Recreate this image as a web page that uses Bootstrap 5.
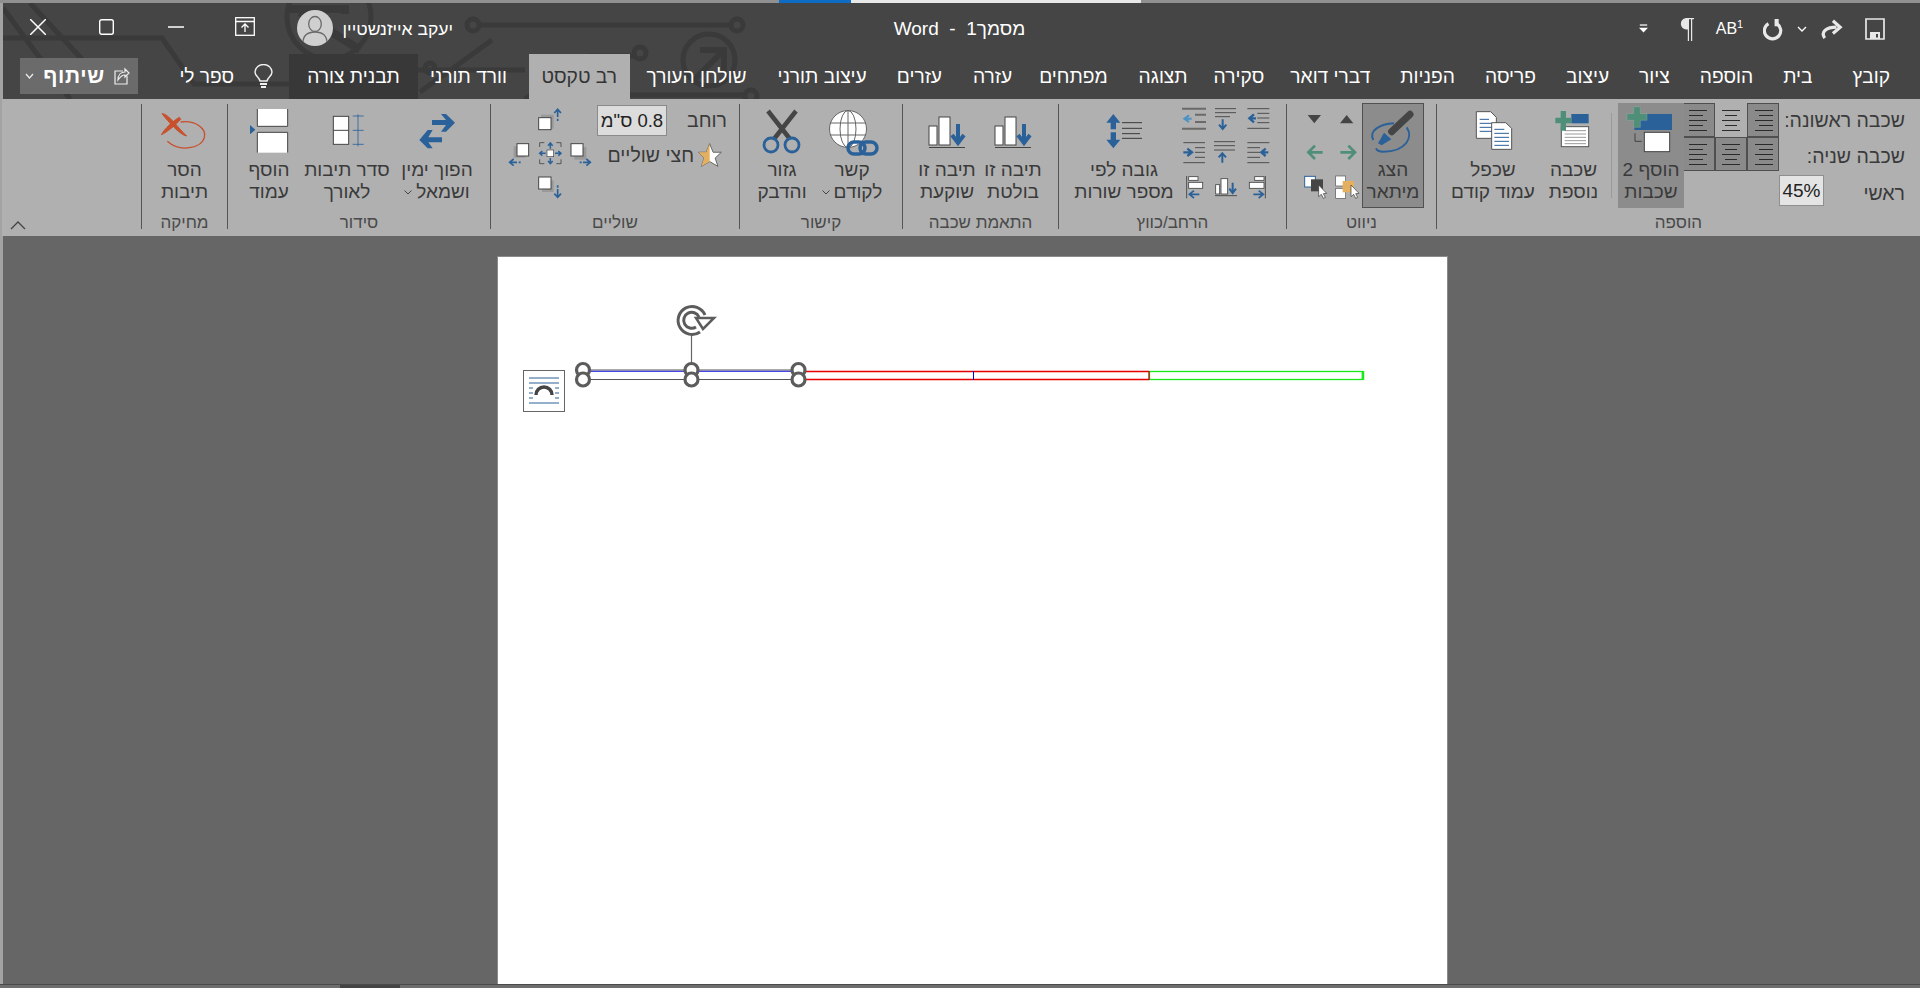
<!DOCTYPE html>
<html lang="he">
<head>
<meta charset="utf-8">
<title>מסמך1 - Word</title>
<link href="https://cdn.jsdelivr.net/npm/bootstrap@5.3.0/dist/css/bootstrap.min.css" rel="stylesheet">
<style>
html,body{height:988px;overflow:hidden;margin:0;background:#666;font-family:"Liberation Sans",Arial,sans-serif;color:#3a3a3a}
svg{display:block;flex:none}
.wd-app{height:988px;border-left:3px solid #a3a3a3}
.wd-strip{height:3px;background:#909090;margin-left:-3px}
.wd-strip-blue{width:72px;margin-left:779px;background:#0f6cc4}
.wd-strip-white{width:290px;background:#e8e8e8}
.wd-head{height:96px;background:#454545;color:#fff}
.wd-bg{left:0;top:0;z-index:0}
.wd-titlerow,.wd-tabrow{z-index:1}
.wd-titlerow{height:51px}
.wd-sys{width:69px;height:51px;padding:0 0 4px;color:#fff;border:0;border-radius:0}
.wd-avatar{width:36px;height:36px;margin:7px 10px 0 18px;border-radius:50%;background:#cfcfcf;overflow:hidden}
.wd-user{font-size:17.5px;width:110px;padding-top:2px;white-space:nowrap}
.wd-side{flex:1 1 0}
.wd-side-r{flex:1 1 0}
.wd-title{font-size:19px;padding-top:2px;margin-left:20px;white-space:nowrap}
.wd-qat{width:43px;height:51px;padding:0;border:0}
.wd-qat-sm{width:16px}
.wd-tabrow{height:45px;font-size:19.2px;padding-right:15px;padding-left:17px}
.wd-tab{padding:0 15px;height:45px;line-height:46px;font-size:19.2px;white-space:nowrap;color:#fff;border:0;border-radius:0}
.wd-tab.wd-on{background:#b0b0b0;color:#333;padding:0 13px;margin:0 1.5px}
.wd-tab.wd-ctx{background:#383838;padding:0 18px}
.wd-g10{margin-left:10px}
.wd-g5{margin-left:5px}
.wd-g1{margin-left:1px}
.wd-gn3{margin-left:-3px}
.wd-gn4{margin-left:-4px}
.wd-tab.wd-on.wd-g5{margin-left:6.5px}
.wd-bulb{margin:0 16px 0 12px}
.wd-share{width:118px;height:36px;margin:4px auto 0 0;background:#6b6b6b;color:#fff;font-weight:700;font-size:21px;letter-spacing:.6px;padding:0 8px 0 5px;border-radius:0;border:0;flex:none}
.wd-ribbon{height:137px;background:#b0b0b0;padding-top:4px;margin-left:-1px}
.rb-group{height:131px;flex:none;padding-right:var(--rp,0)}
.rb-body{height:110px}
.rb-label{height:20px;line-height:20px;font-size:17px;color:#4a4a4a;text-align:center;white-space:nowrap;margin-right:calc(-1*var(--rp,0px))}
.rb-sep{width:1px;height:125px;margin-top:1px;background:#555;flex:none}
.rb-big{height:105px;font-size:19px;line-height:22px;color:#3a3a3a;padding:0;border:0;border-radius:0;white-space:nowrap;flex:none}
.rb-big.rb-active{background:#8c8c8c}
.rb-big.rb-outline{background:#8c8c8c;border:1px solid #505050}
.rb-chev{font-size:11px}
.g-ins{width:483px;--rp:15px}
.g-nav{width:149px;--rp:12px}
.g-exp{width:227px;--rp:11px}
.g-fit{width:155px;--rp:12px}
.g-lnk{width:162px;--rp:12px}
.g-mar{width:248px;--rp:12px}
.g-arr{width:262px;--rp:8px}
.g-del{width:85px}
.g-rest{width:141px}
.rb-labels{width:126px;font-size:19.5px;line-height:20px;white-space:nowrap;flex:none}
.rb-l1{height:34px;line-height:34px}
.rb-l2{height:38px;line-height:38px}
.rb-l3{height:30px;line-height:36px}
.rb-input{width:45px;height:31px;background:#e4e4e4;border:1px solid #8f8f8f;color:#222;font-size:19px;line-height:30px;text-align:center}
.rb-cells{width:95px;flex:none;grid-template-columns:repeat(3,32px);grid-template-rows:34px 34px;height:68px}
.rb-cell{background:#8a8a8a;border:1px solid #4f4f4f;padding:0;border-radius:0;width:32px;height:34px}
.rb-cell.rb-off{background:#b0b0b0;border-color:transparent}
.rb-vsep{width:1px;height:85px;margin:10px 6px 0 0;background:#9a9a9a;flex:none}
.rb-small3{grid-template-columns:33px 33px 33px;grid-template-rows:32px 36px 38px}
.rb-small2{grid-template-columns:32px 32px;grid-template-rows:32px 36px 38px}
.rb-marcol{width:130px;padding-top:2px;font-size:19.5px;white-space:nowrap}
.rb-wrow{height:30px;line-height:30px}
.rb-srow{height:30px;line-height:30px;margin-top:5px;padding-right:5px}
.rb-box{width:70px;height:31px;background:#dcdcdc;border:1px solid #8a8a8a;line-height:29px;color:#222;text-align:center;font-size:18.5px}
.rb-col{margin-right:5px;padding-top:4px}
.wd-canvas{background:#666;padding-top:21px}
.wd-page{width:949px;height:727px;margin-left:22px;background:#fff;box-shadow:0 0 0 1px #8a8a8a}
.wd-foot{height:4px;background:#6e6e6e;border-top:1px solid #4a4a4a;margin-left:-3px;padding-left:340px}
.wd-thumb{width:60px;height:3px;background:#444}
</style>
</head>
<body>
<div class="wd-app d-flex flex-column">
  <div class="wd-strip d-flex flex-none"><div class="wd-strip-blue"></div><div class="wd-strip-white"></div></div>

  <header class="wd-head position-relative overflow-hidden">
    <svg class="wd-bg position-absolute" width="1917" height="96" viewBox="3 3 1917 96" fill="none" stroke="#3a3a3a" stroke-width="5">
      <path d="M3 38H162L194 84H300M3 8 70 99"/>
      <path d="M30 3 92 70"/>
      <circle cx="329" cy="17" r="42"/>
      <path d="M290 9H345V14M300 12 360 50" stroke-width="8"/>
      <path d="M478 25H732"/><circle cx="473" cy="25" r="6"/><circle cx="737" cy="25" r="6"/>
      <path d="M420 92 492 40M400 70H525"/><circle cx="430" cy="68" r="5"/>
      <path d="M525 99 590 56 H634"/><circle cx="640" cy="53" r="6"/>
      <circle cx="709" cy="60" r="26"/>
      <path d="M700 50H724V74M724 50 694 80" stroke-width="6"/>
      <path d="M630 95H745"/><circle cx="751" cy="96" r="6"/>
    </svg>
    <div class="wd-titlerow d-flex position-relative">
      <div class="wd-side d-flex">
        <button type="button" class="btn wd-sys d-flex align-items-center justify-content-center" aria-label="סגור"><svg width="16" height="16" viewBox="0 0 16 16" stroke="#fff" stroke-width="1.5"><path d="M0 0 16 16M16 0 0 16"/></svg></button>
        <button type="button" class="btn wd-sys d-flex align-items-center justify-content-center" aria-label="הגדל"><svg width="15" height="16" viewBox="0 0 15 16" fill="none" stroke="#fff" stroke-width="1.4"><rect x=".7" y=".7" width="13.6" height="14.6" rx="2"/></svg></button>
        <button type="button" class="btn wd-sys d-flex align-items-center justify-content-center" aria-label="מזער"><svg width="16" height="2" viewBox="0 0 16 2" stroke="#fff" stroke-width="1.5"><path d="M0 1H16"/></svg></button>
        <button type="button" class="btn wd-sys d-flex align-items-center justify-content-center" aria-label="תצוגה"><svg width="20" height="19" viewBox="0 0 20 19" fill="none" stroke="#fff" stroke-width="1.3"><rect x=".7" y=".7" width="18.6" height="17.6"/><path d="M.7 4.5H19.3M10 15V7M6.5 10.5 10 7l3.5 3.5" /></svg></button>
        <div class="wd-avatar"><svg width="36" height="36" viewBox="0 0 36 36" fill="none" stroke="#6a6a6a" stroke-width="1.3"><ellipse cx="18" cy="14" rx="6.3" ry="7.5"/><path d="M6 33c0-8 5-11 12-11s12 3 12 11"/></svg></div>
        <div class="wd-user d-flex align-items-center" dir="rtl">יעקב אייזנשטיין</div>
      </div>
      <div class="wd-title d-flex align-items-center" dir="rtl">מסמך1&nbsp; - &nbsp;Word</div>
      <div class="wd-side-r d-flex justify-content-end pe-4">
        <button type="button" class="btn wd-qat d-flex align-items-center justify-content-center" aria-label="התאמה אישית"><svg width="9" height="9" viewBox="0 0 11 10" fill="#fff"><rect x="1" y="0" width="9" height="1.5"/><path d="M0 4H11L5.500 10Z"/></svg></button>
        <button type="button" class="btn wd-qat d-flex align-items-center justify-content-center" aria-label="פסקה"><svg width="16" height="24" viewBox="0 0 16 24"><path d="M7 1H15V2.200H13.200V24H12V2.200H10V24H8.800V12.500A6 5.700 0 0 1 7 1Z" fill="#e8e8e8"/></svg></button>
        <button type="button" class="btn wd-qat d-flex align-items-center justify-content-center p-0 text-white" aria-label="AB"><span class="fs-6 lh-1" dir="ltr">AB<sup class="rb-chev">1</sup></span></button>
        <button type="button" class="btn wd-qat d-flex align-items-center justify-content-center" aria-label="בטל"><svg width="20" height="24" viewBox="0 0 22 24" fill="none" stroke="#e8e8e8" stroke-width="3.500"><path d="M6 6A9 9 0 1 0 15 6"/><path d="M15 1V9" stroke-width="4.500"/></svg></button>
        <button type="button" class="btn wd-qat wd-qat-sm d-flex align-items-center justify-content-center" aria-label="עוד"><svg width="10" height="6" viewBox="0 0 10 6" fill="none" stroke="#fff" stroke-width="1.300"><path d="M1 1 5 5 9 1"/></svg></button>
        <button type="button" class="btn wd-qat d-flex align-items-center justify-content-center" aria-label="חזור"><svg width="22" height="20" viewBox="0 0 24 22" fill="none" stroke="#e8e8e8" stroke-width="3.500"><path d="M4 21C-1 14 6 9 17 9"/><path d="M13 2 21 9l-8 7" /></svg></button>
        <button type="button" class="btn wd-qat d-flex align-items-center justify-content-center" aria-label="שמור"><svg width="20" height="22" viewBox="0 0 20 22" fill="none" stroke="#e8e8e8" stroke-width="1.700"><path d="M1 1H19V21H1Z"/><rect x="5" y="14" width="10" height="7" fill="#e8e8e8" stroke="none"/><rect x="11" y="16" width="2" height="3.500" fill="#454545" stroke="none"/></svg></button>
      </div>
    </div>
    <nav class="wd-tabrow d-flex position-relative" dir="rtl">
      <a class="btn wd-tab wd-g10">קובץ</a><a class="btn wd-tab">בית</a><a class="btn wd-tab">הוספה</a><a class="btn wd-tab">ציור</a><a class="btn wd-tab">עיצוב</a><a class="btn wd-tab">פריסה</a><a class="btn wd-tab">הפניות</a><a class="btn wd-tab wd-gn4">דברי דואר</a><a class="btn wd-tab wd-gn4">סקירה</a><a class="btn wd-tab wd-g1">תצוגה</a><a class="btn wd-tab wd-gn3">מפתחים</a><a class="btn wd-tab wd-g1">עזרה</a><a class="btn wd-tab">עזרים</a><a class="btn wd-tab wd-g1">עיצוב תורני</a><a class="btn wd-tab">שולחן העורך</a><a class="btn wd-tab wd-on wd-g5">רב טקסט</a><a class="btn wd-tab wd-gn3">וורד תורני</a><a class="btn wd-tab wd-ctx">תבנית צורה</a>
      <div class="wd-bulb d-flex align-items-center"><svg width="19" height="26" viewBox="0 0 19 26" fill="none" stroke="#f0f0f0" stroke-width="1.400"><path d="M6 17C5 13 1 12 1 8A8.500 7.500 0 0 1 18 8C18 12 14 13 13 17Z"/><path d="M6 20H13M7 23H12" stroke-width="1.800"/></svg></div>
      <a class="btn wd-tab px-2">ספר לי</a>
      <button type="button" class="btn wd-share d-flex align-items-center justify-content-between"><svg width="16" height="18" viewBox="0 0 16 18" fill="none" stroke="#eee" stroke-width="1.200"><path d="M9 4H1V17H13V9"/><path d="M4 13C4 8 7 5 11 5V2L15 6 11 10V8C8 8 6 10 4 13Z"/></svg><span>שיתוף</span><svg width="9" height="6" viewBox="0 0 9 6" fill="none" stroke="#eee" stroke-width="1.200"><path d="M1 1 4.500 5 8 1"/></svg></button>
    </nav>
  </header>

  <section class="wd-ribbon d-flex flex-shrink-0" dir="rtl">
    <!-- הוספה -->
    <div class="rb-group g-ins">
      <div class="rb-body d-flex">
        <div class="rb-labels">
          <div class="rb-l1">שכבה ראשונה:</div>
          <div class="rb-l2">שכבה שניה:</div>
          <div class="rb-l3 d-flex justify-content-between"><span>ראשי</span><div class="rb-input" dir="ltr">45%</div></div>
        </div>
        <div class="rb-cells d-grid">
          <button type="button" class="btn rb-cell" aria-label="ימין"><svg width="30" height="32" viewBox="0 0 30 32" stroke="#2a2a2a"><path d="M7 6.500H25M11 11.500H25M7 16.500H25M11 21.500H25M7 26.500H25"/></svg></button>
          <button type="button" class="btn rb-cell rb-off" aria-label="מרכז"><svg width="30" height="32" viewBox="0 0 30 32" stroke="#2a2a2a"><path d="M6 6.500H24M9 11.500H21M6 16.500H24M9 21.500H21M6 26.500H24"/></svg></button>
          <button type="button" class="btn rb-cell" aria-label="שמאל"><svg width="30" height="32" viewBox="0 0 30 32" stroke="#2a2a2a"><path d="M5 6.500H23M5 11.500H19M5 16.500H23M5 21.500H19M5 26.500H23"/></svg></button>
          <button type="button" class="btn rb-cell" aria-label="ימין"><svg width="30" height="32" viewBox="0 0 30 32" stroke="#2a2a2a"><path d="M7 6.500H25M11 11.500H25M7 16.500H25M11 21.500H25M7 26.500H25"/></svg></button>
          <button type="button" class="btn rb-cell" aria-label="מרכז"><svg width="30" height="32" viewBox="0 0 30 32" stroke="#2a2a2a"><path d="M6 6.500H24M9 11.500H21M6 16.500H24M9 21.500H21M6 26.500H24"/></svg></button>
          <button type="button" class="btn rb-cell" aria-label="שמאל"><svg width="30" height="32" viewBox="0 0 30 32" stroke="#2a2a2a"><path d="M5 6.500H23M5 11.500H19M5 16.500H23M5 21.500H19M5 26.500H23"/></svg></button>
        </div>
        <button type="button" class="btn rb-big rb-active d-flex flex-column align-items-center" style="width:66px">
          <svg width="66" height="56" viewBox="981 9 198 168"><path d="M1030 42H1143V90H1030Z" fill="#2b6199"/><path d="M1028 20H1048V41H1068V61H1048V82H1028V61H1008V41H1028Z" fill="#4f8f77" stroke="#a0b8ae" stroke-width="1"/><path d="M1032 100V124H1052" fill="none" stroke="#444" stroke-width="3"/><rect x="1060" y="97" width="76" height="58" fill="#fff" stroke="#444" stroke-width="3"/></svg>
          <span>הוסף 2<br>שכבות</span>
        </button>
        <div class="rb-vsep"></div>
        <button type="button" class="btn rb-big d-flex flex-column align-items-center ms-1" style="width:75px">
          <svg width="70" height="56" viewBox="741 9 210 168"><path d="M838 42H890V70H838Z" fill="#2b6199"/><rect x="808" y="80" width="82" height="60" fill="#fff" stroke="#555" stroke-width="3"/><path d="M818 92H882M818 102H882M818 112H882M818 122H882M818 131H882" stroke="#999" stroke-width="3"/><path d="M806 33H822V53H838V70H822V92H806V70H790V53H806Z" fill="#4f8f77"/></svg>
          <span>שכבה<br>נוספת</span>
        </button>
        <button type="button" class="btn rb-big d-flex flex-column align-items-center" style="width:78px">
          <svg width="78" height="56" viewBox="495 9 234 168"><path d="M562 35H605L622 52V115H562Z" fill="#fff" stroke="#555" stroke-width="3"/><path d="M572 58H600M572 70H612M572 82H612M572 94H612" stroke="#2b6199" stroke-width="3"/><path d="M608 68H650L668 85V148H608Z" fill="#fff" stroke="#555" stroke-width="3"/><path d="M616 88H646M616 100H660M616 112H660M616 124H660M616 136H660" stroke="#2b6199" stroke-width="3"/></svg>
          <span>שכפל<br>עמוד קודם</span>
        </button>
      </div>
      <div class="rb-label">הוספה</div>
    </div>
    <div class="rb-sep"></div>
    <!-- ניווט -->
    <div class="rb-group g-nav">
      <div class="rb-body d-flex">
        <button type="button" class="btn rb-big rb-outline d-flex flex-column align-items-center" style="width:62px">
          <svg width="60" height="55" viewBox="219 12 180 165"><path d="M360 43 305 95" stroke="#454545" stroke-width="21" stroke-linecap="round"/><path d="M282 98 304 118 275 136 264 130Z" fill="#2b6199"/><path d="M250 120C235 92 270 72 312 70M350 82C370 110 350 155 280 155 268 155 260 150 258 145" fill="none" stroke="#2b6199" stroke-width="6"/></svg>
          <span>הצג<br>מיתאר</span>
        </button>
        <div class="rb-small2 d-grid">
          <svg width="32" height="32" viewBox="117 9 96 96"><path d="M147 70 167 45 187 70Z" fill="#454545"/></svg>
          <svg width="32" height="32" viewBox="21 9 96 96"><path d="M50 45H90L70 70Z" fill="#454545"/></svg>
          <svg width="32" height="36" viewBox="117 105 96 108"><path d="M148 157H190M172 137 192 157 172 177" fill="none" stroke="#4f8f77" stroke-width="8"/></svg>
          <svg width="32" height="36" viewBox="21 105 96 108"><path d="M95 157H52M72 137 52 157 72 177" fill="none" stroke="#4f8f77" stroke-width="8"/></svg>
          <svg width="32" height="38" viewBox="117 213 96 114"><rect x="134" y="228" width="30" height="30" fill="#fff" stroke="#555" stroke-width="2"/><rect x="134" y="265" width="30" height="30" fill="#fff" stroke="#555" stroke-width="2"/><rect x="155" y="243" width="34" height="34" fill="#e4b060"/><path d="M180 255V290L188 283 194 295 200 292 194 281 204 280Z" fill="#fff" stroke="#333" stroke-width="2"/></svg>
          <svg width="32" height="38" viewBox="21 213 96 114"><rect x="41" y="229" width="32" height="32" fill="#fff" stroke="#2b6199" stroke-width="3"/><rect x="60" y="238" width="36" height="36" fill="#454545"/><path d="M83 255V290L91 283 97 295 103 292 97 281 107 280Z" fill="#fff" stroke="#333" stroke-width="2"/></svg>
        </div>
      </div>
      <div class="rb-label">ניווט</div>
    </div>
    <div class="rb-sep"></div>
    <!-- הרחב/כווץ -->
    <div class="rb-group g-exp">
      <div class="rb-body d-flex">
        <div class="rb-small3 d-grid">
          <svg width="33" height="32" viewBox="546 9 99 96"><g fill="none" stroke="#3a3a3a" stroke-width="2.500"><path d="M562 26H628M592 40H628M592 54H628M592 68H628M562 85H628"/></g><path d="M588 55H572M582 43 568 55 582 67" fill="none" stroke="#2b6199" stroke-width="7"/></svg>
          <svg width="33" height="32" viewBox="447 9 99 96"><path d="M465 26H528M465 38H528M465 50H510" fill="none" stroke="#3a3a3a" stroke-width="2.500"/><path d="M488 58V86M477 74 488 87 499 74" fill="none" stroke="#2b6199" stroke-width="6"/></svg>
          <svg width="33" height="32" viewBox="348 9 99 96"><path d="M366 26H438M366 86H438M405 44H438M405 66H438" fill="none" stroke="#6a6a68" stroke-width="6"/><path d="M395 56H378M387 46 373 56 387 66" fill="none" stroke="#4a92c4" stroke-width="6"/></svg>
          <svg width="33" height="36" viewBox="546 105 99 108"><path d="M562 128H628M562 143H600M562 157H600M562 172H600M562 188H628" fill="none" stroke="#3a3a3a" stroke-width="2.500"/><path d="M625 157H608M617 146 604 157 617 168" fill="none" stroke="#2b6199" stroke-width="7"/></svg>
          <svg width="33" height="36" viewBox="447 105 99 108"><path d="M462 125H525M462 137H525M462 150H525" fill="none" stroke="#3a3a3a" stroke-width="2.500"/><path d="M487 188V162M476 172 487 160 498 172" fill="none" stroke="#2b6199" stroke-width="6"/></svg>
          <svg width="33" height="36" viewBox="348 105 99 108"><path d="M370 128H435M405 143H435M405 157H435M405 172H435M370 188H435" fill="none" stroke="#3a3a3a" stroke-width="2.500"/><path d="M370 157H390M382 146 396 157 382 168" fill="none" stroke="#2b6199" stroke-width="7"/></svg>
          <svg width="33" height="38" viewBox="546 213 99 114"><path d="M616 228V295" stroke="#3a3a3a" stroke-width="2.500"/><rect x="584" y="230" width="28" height="11" fill="#fff" stroke="#444" stroke-width="2.500"/><rect x="568" y="247" width="44" height="18" fill="#fff" stroke="#444" stroke-width="2.500"/><path d="M580 283H606M596 272 610 283 596 294" fill="none" stroke="#2b6199" stroke-width="5"/></svg>
          <svg width="33" height="38" viewBox="447 213 99 114"><path d="M465 287H531" stroke="#3a3a3a" stroke-width="2.500"/><rect x="467" y="254" width="12" height="28" fill="#fff" stroke="#444" stroke-width="2.500"/><rect x="483" y="236" width="20" height="46" fill="#fff" stroke="#444" stroke-width="2.500"/><path d="M518 248V278M508 266 518 279 528 266" fill="none" stroke="#2b6199" stroke-width="6"/></svg>
          <svg width="33" height="38" viewBox="348 213 99 114"><path d="M380 228V295" stroke="#3a3a3a" stroke-width="2.500"/><rect x="386" y="230" width="28" height="11" fill="#fff" stroke="#444" stroke-width="2.500"/><rect x="386" y="247" width="42" height="18" fill="#fff" stroke="#444" stroke-width="2.500"/><path d="M418 283H392M402 272 388 283 402 294" fill="none" stroke="#2b6199" stroke-width="5"/></svg>
        </div>
        <button type="button" class="btn rb-big d-flex flex-column align-items-center" style="width:104px">
          <svg width="104" height="56" viewBox="36 9 312 168"><path d="M160 42 181 68H168V88H152V68H139Z" fill="#2b6199"/><path d="M160 145 181 119H168V97H152V119H139Z" fill="#2b6199"/><path d="M186 68H246M186 85H246M186 101H240M186 115H246" fill="none" stroke="#3a3a3a" stroke-width="3"/></svg>
          <span>גובה לפי<br>מספר שורות</span>
        </button>
      </div>
      <div class="rb-label">הרחב/כווץ</div>
    </div>
    <div class="rb-sep"></div>
    <!-- התאמת שכבה -->
    <div class="rb-group g-fit">
      <div class="rb-body d-flex">
        <button type="button" class="btn rb-big d-flex flex-column align-items-center" style="width:66px">
          <svg width="66" height="56" viewBox="0 0 66 56"><rect x="15" y="23" width="8" height="19" fill="#fff" stroke="#444" stroke-width="1"/><rect x="25" y="14" width="11" height="28" fill="#fff" stroke="#444" stroke-width="1"/><path d="M44 20V40M38 31 44 39 50 31" transform="translate(0 1)" fill="none" stroke="#2b6199" stroke-width="4"/><path d="M15 44.500H51" stroke="#444"/></svg>
          <span>תיבה זו<br>בולטת</span>
        </button>
        <button type="button" class="btn rb-big d-flex flex-column align-items-center" style="width:66px">
          <svg width="66" height="56" viewBox="0 0 66 56"><rect x="15" y="23" width="8" height="19" fill="#fff" stroke="#444" stroke-width="1"/><rect x="25" y="14" width="11" height="28" fill="#fff" stroke="#444" stroke-width="1"/><path d="M44 20V40M38 31 44 39 50 31" transform="translate(0 1)" fill="none" stroke="#2b6199" stroke-width="4"/><path d="M15 44.500H51" stroke="#444"/></svg>
          <span>תיבה זו<br>שוקעת</span>
        </button>
      </div>
      <div class="rb-label">התאמת שכבה</div>
    </div>
    <div class="rb-sep"></div>
    <!-- קישור -->
    <div class="rb-group g-lnk">
      <div class="rb-body d-flex">
        <button type="button" class="btn rb-big d-flex flex-column align-items-center" style="width:76px">
          <svg width="76" height="56" viewBox="0 0 76 56"><circle cx="34" cy="26" r="18.500" fill="#fff" stroke="#666"/><ellipse cx="34" cy="26" rx="8" ry="18.500" fill="none" stroke="#666"/><path d="M34 7.500V44.500M16 20H52M16 32H52" stroke="#666" fill="none"/><rect x="34" y="39" width="17" height="12" rx="6" fill="none" stroke="#2b6199" stroke-width="3.500"/><rect x="46" y="39" width="17" height="12" rx="6" fill="none" stroke="#2b6199" stroke-width="3.500"/></svg>
          <span>קשר<br><span class="d-inline-flex align-items-center gap-1">לקודם <svg width="8" height="5" viewBox="0 0 8 5" fill="none" stroke="#444"><path d="M.5.500 4 4 7.500.500"/></svg></span></span>
        </button>
        <button type="button" class="btn rb-big d-flex flex-column align-items-center" style="width:64px">
          <svg width="64" height="56" viewBox="0 0 64 56"><path d="M18 8 40 36M46 8 24 36" stroke="#454545" stroke-width="4.500" fill="none"/><circle cx="21" cy="42" r="7" fill="none" stroke="#2b6199" stroke-width="2.800"/><circle cx="42" cy="42" r="7" fill="none" stroke="#2b6199" stroke-width="2.800"/></svg>
          <span>גזור<br>והדבק</span>
        </button>
      </div>
      <div class="rb-label">קישור</div>
    </div>
    <div class="rb-sep"></div>
    <!-- שוליים -->
    <div class="rb-group g-mar">
      <div class="rb-body d-flex">
        <div class="rb-marcol">
          <div class="rb-wrow d-flex justify-content-between"><span>רוחב</span><div class="rb-box" dir="rtl">0.8 ס"מ</div></div>
          <div class="rb-srow d-flex align-items-center gap-1"><svg width="24" height="24" viewBox="598 128 70 70"><path d="M632 130 642 155 666 155 648 172 656 196 632 182 608 196 616 172 600 155 622 155Z" fill="#fff" stroke="#555" stroke-width="2.500"/><path d="M632 130 622 155 600 155 616 172 608 196 632 182Z" fill="#e4b060"/></svg><span>חצי שוליים</span></div>
        </div>
        <div class="rb-col">
          <svg width="85" height="92" viewBox="20 20 255 276">
            <g fill="#999"><rect x="122" y="43" width="38" height="42"/><rect x="40" y="138" width="35" height="34"/><rect x="222" y="140" width="36" height="38"/><rect x="125" y="240" width="35" height="35"/></g>
            <g fill="#fff" stroke="#444" stroke-width="3"><rect x="115" y="52" width="37" height="36"/><rect x="50" y="130" width="35" height="37"/><rect x="212" y="130" width="36" height="37"/><rect x="115" y="230" width="37" height="36"/></g>
            <g fill="none" stroke="#2b6199" stroke-width="5"><path d="M172 30V50M172 55V62M162 38 172 27 182 38"/><path d="M30 186H50M55 186H61M40 176 28 186 40 196"/><path d="M238 186H244M248 186H268M258 176 270 186 258 196"/><path d="M172 255V262M172 266V288M162 280 172 291 182 280"/></g>
            <path d="M118 140V127H132M168 127H182V140M182 177V190H168M132 190H118V177" fill="none" stroke="#444" stroke-width="2.500"/>
            <rect x="140" y="149" width="20" height="20" fill="#fff" stroke="#444" stroke-width="2"/>
            <g fill="none" stroke="#2b6199" stroke-width="4.500"><path d="M150 145V130M143 136 150 128 157 136"/><path d="M150 173V188M143 182 150 190 157 182"/><path d="M136 159H120M126 152 118 159 126 166"/><path d="M164 159H180M174 152 182 159 174 166"/></g>
          </svg>
        </div>
      </div>
      <div class="rb-label">שוליים</div>
    </div>
    <div class="rb-sep"></div>
    <!-- סידור -->
    <div class="rb-group g-arr">
      <div class="rb-body d-flex">
        <button type="button" class="btn rb-big d-flex flex-column align-items-center" style="width:90px">
          <svg width="90" height="56" viewBox="753 9 270 168"><path d="M873 60H915L900 42H915L942 68 915 95H900L915 75H873Z" fill="#2b6199"/><path d="M903 112H862L875 90H860L835 120 860 145H875L862 127H903Z" fill="#2b6199"/></svg>
          <span>הפוך ימין<br><span class="d-inline-flex align-items-center gap-1">ושמאל <svg width="8" height="5" viewBox="0 0 8 5" fill="none" stroke="#444"><path d="M.5.500 4 4 7.500.500"/></svg></span></span>
        </button>
        <button type="button" class="btn rb-big d-flex flex-column align-items-center" style="width:90px">
          <svg width="90" height="56" viewBox="483 9 270 168"><rect x="577" y="49" width="46" height="84" fill="#fff" stroke="#444" stroke-width="3"/><path d="M577 91H623" stroke="#444" stroke-width="3"/><path d="M651 43V139M635 48H668M635 91H668M635 133H668" stroke="#2b6199" stroke-width="2.500" fill="none"/></svg>
          <span>סדר תיבות<br>לאורך</span>
        </button>
        <button type="button" class="btn rb-big d-flex flex-column align-items-center" style="width:66px">
          <svg width="66" height="56" viewBox="285 9 198 168"><rect x="349" y="27" width="91" height="52" fill="#fff"/><path d="M349 27V79H440V27" fill="none" stroke="#444" stroke-width="3"/><rect x="349" y="97" width="91" height="61" fill="#fff"/><path d="M349 158V97H440V158" fill="none" stroke="#444" stroke-width="3"/><path d="M327 75 343 89 327 103Z" fill="#2b6199"/></svg>
          <span>הוסף<br>עמוד</span>
        </button>
      </div>
      <div class="rb-label">סידור</div>
    </div>
    <div class="rb-sep"></div>
    <!-- מחיקה -->
    <div class="rb-group g-del">
      <div class="rb-body d-flex justify-content-center">
        <button type="button" class="btn rb-big d-flex flex-column align-items-center" style="width:85px">
          <svg width="85" height="56" viewBox="6 9 255 168"><path d="M66 41C85 40 115 85 140 108 120 105 85 65 66 41Z" fill="#c8502d" stroke="#c8502d" stroke-width="3"/><path d="M118 52C100 62 75 85 64 104 80 98 110 72 122 58Z" fill="#c8502d" stroke="#c8502d" stroke-width="3"/><path d="M122 66C165 60 200 85 193 112 185 145 120 158 82 124" fill="none" stroke="#c8502d" stroke-width="4"/></svg>
          <span>הסר<br>תיבות</span>
        </button>
      </div>
      <div class="rb-label">מחיקה</div>
    </div>
    <div class="rb-sep"></div>
    <div class="rb-group g-rest d-flex align-items-end justify-content-start">
      <svg class="mb-1 me-auto" style="margin-left:10px" width="16" height="9" viewBox="0 0 16 9" fill="none" stroke="#444" stroke-width="1.300"><path d="M1 8 8 1l7 7"/></svg>
    </div>
  </section>

  <main class="wd-canvas flex-grow-1 d-flex justify-content-center overflow-hidden">
    <div class="wd-page">
      <svg width="949" height="180" viewBox="498 257 949 180" fill="none">
        <rect x="523.500" y="370.500" width="41" height="41" fill="#fff" stroke="#666"/>
        <path d="M529 378H559M529 383H559M529 388H533M555 388H559M529 393H533M555 393H559M529 398H533M555 398H559M529 403H559" stroke="#2b6199" stroke-width="1.200"/>
        <path d="M536 395A8 8 0 0 1 552 395" stroke="#454545" stroke-width="3.500"/>
        <path d="M798 371.500H1149M798 379.500H1149" stroke="#e80000" stroke-width="1.300"/>
        <path d="M973.500 371V380" stroke="#0000e0" stroke-width="1"/>
        <rect x="1149.500" y="371.500" width="213" height="8" stroke="#18e818" stroke-width="1.300"/>
        <path d="M1149 371V380" stroke="#b00000" stroke-width="1.200"/>
        <path d="M1363 371V380" stroke="#18e818" stroke-width="2.500"/>
        <path d="M583 370H798M583 379.500H798" stroke="#555" stroke-width="1"/>
        <path d="M583 371.300H798" stroke="#0000e0" stroke-width=".9"/>
        <path d="M691.500 334V363" stroke="#666" stroke-width="1.200"/>
        <g fill="#fff" stroke="#5c5c5c" stroke-width="3.200"><circle cx="583" cy="370" r="6.500"/><circle cx="691.500" cy="370" r="6.500"/><circle cx="798.500" cy="370" r="6.500"/><circle cx="583" cy="379.500" r="6.500"/><circle cx="691.500" cy="379.500" r="6.500"/><circle cx="798.500" cy="379.500" r="6.500"/></g>
        <path d="M700 332A14 14 0 1 1 705 315" stroke="#5c5c5c" stroke-width="3"/>
        <path d="M696 327A8 8 0 1 1 699 317" stroke="#5c5c5c" stroke-width="3"/>
        <path d="M696 318H714L703 329Z" fill="#fff" stroke="#5c5c5c" stroke-width="2.500"/>
      </svg>
    </div>
  </main>
  <footer class="wd-foot flex-shrink-0"><div class="wd-thumb"></div></footer>
</div>
<script src="https://cdn.jsdelivr.net/npm/bootstrap@5.3.0/dist/js/bootstrap.bundle.min.js"></script>
</body>
</html>
